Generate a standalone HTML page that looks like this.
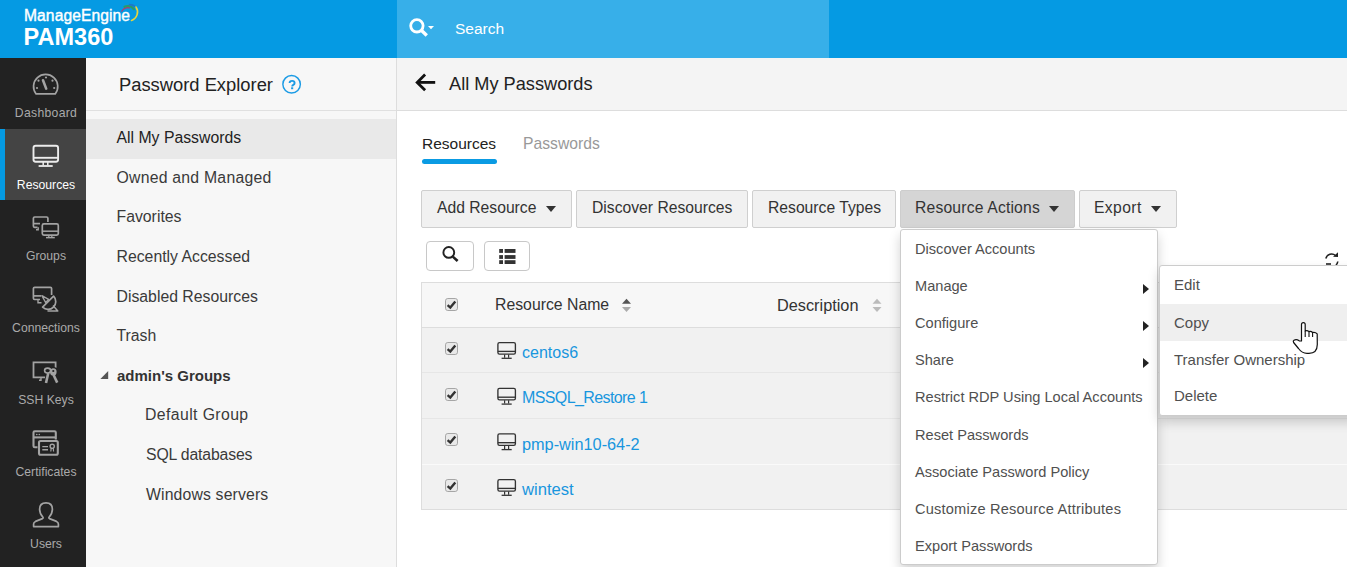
<!DOCTYPE html>
<html><head><meta charset="utf-8">
<style>
*{box-sizing:border-box;margin:0;padding:0}
html,body{width:1347px;height:567px;overflow:hidden;background:#fff;font-family:"Liberation Sans",sans-serif;color:#333}
.a{position:absolute}
.t{position:absolute;line-height:1;white-space:nowrap}
#hdr{left:0;top:0;width:1347px;height:58px;background:#059ae3}
#srch{left:397px;top:0;width:432px;height:58px;background:#37afe9}
#nav{left:0;top:58px;width:86px;height:509px;background:#222}
#navact{left:0;top:129px;width:86px;height:71px;background:#444}
#navbar{left:0;top:129px;width:5px;height:71px;background:#059ae3}
.nl{color:#aaa;font-size:12.2px;width:86px;text-align:center;left:3px}
#exp{left:86px;top:58px;width:311px;height:509px;background:#f7f7f7;border-right:1px solid #ddd}
#exphd{left:86px;top:110px;width:310px;height:1px;background:#e0e0e0}
#expact{left:86px;top:119px;width:310px;height:40px;background:#e9e9e9}
.el{font-size:15.8px;color:#3a3a3a;left:116.5px}
#topbar{left:397px;top:58px;width:950px;height:53px;background:#f4f4f4;border-bottom:1px solid #ddd}
.btn{position:absolute;top:190px;height:38px;background:#f1f1f1;border:1px solid #cfcfcf;border-radius:2px}
.bt{font-size:15.7px;color:#333}
.caret{position:absolute;width:0;height:0;border-left:5px solid transparent;border-right:5px solid transparent;border-top:6px solid #333}
.ib{position:absolute;top:241px;height:30px;background:#fff;border:1px solid #c8c8c8;border-radius:4px}
#tbl{left:421px;top:282px;width:930px;height:228px;border:1px solid #ddd;background:#f1f1f1}
#thd{left:422px;top:283px;width:930px;height:45px;background:#f7f7f7;border-bottom:1px solid #ddd}
.rsep{position:absolute;left:422px;width:930px;height:1px;background:#e6e6e6}
.cb{position:absolute;left:445px;width:13px;height:13px;border:1px solid #9a9a9a;border-radius:2px;background:#e6e6e6}
.link{font-size:16px;color:#1896de}
#dd{left:900px;top:229px;width:258px;height:336px;background:#fff;border:1px solid #ccc;border-radius:3px;box-shadow:0 6px 12px rgba(0,0,0,.175)}
.di{font-size:14.6px;color:#505050;left:915px}
.arr{position:absolute;left:1143px;width:0;height:0;border-top:5.5px solid transparent;border-bottom:5.5px solid transparent;border-left:6px solid #222}
#sub{left:1159px;top:265px;width:200px;height:151px;background:#fff;border:1px solid #ccc;border-radius:3px;box-shadow:0 6px 12px rgba(0,0,0,.175)}
#subhov{left:1160px;top:304px;width:200px;height:37px;background:#efefef}
.si{font-size:15px;color:#505050;left:1174px}
</style></head><body>
<div class="a" id="hdr"></div>
<div class="a" id="srch"></div>
<div class="t" style="left:24px;top:8.2px;font-size:15.6px;font-weight:400;color:#fff;-webkit-text-stroke:0.4px #fff;letter-spacing:0.1px">ManageEngine</div>
<div class="t" style="left:23.6px;top:25.9px;font-size:23.5px;font-weight:700;color:#fff">PAM360</div>
<div class="t" style="left:455px;top:20.6px;font-size:15.5px;color:#fff">Search</div>

<div class="a" id="nav"></div>
<div class="a" id="navact"></div>
<div class="a" id="navbar"></div>
<div class="t nl" style="top:107.1px;letter-spacing:0.3px">Dashboard</div>
<div class="t nl" style="top:179.0px;color:#fff">Resources</div>
<div class="t nl" style="top:249.5px">Groups</div>
<div class="t nl" style="top:322.0px">Connections</div>
<div class="t nl" style="top:394.0px">SSH Keys</div>
<div class="t nl" style="top:466.0px">Certificates</div>
<div class="t nl" style="top:538.0px">Users</div>

<div class="a" id="exp"></div>
<div class="a" id="exphd"></div>
<div class="a" id="expact"></div>
<div class="t" style="left:119px;top:75.9px;font-size:18.35px;color:#222">Password Explorer</div>
<div class="t el" style="top:130px;color:#222">All My Passwords</div>
<div class="t el" style="top:169.5px;letter-spacing:0.23px">Owned and Managed</div>
<div class="t el" style="top:208.6px">Favorites</div>
<div class="t el" style="top:248.6px">Recently Accessed</div>
<div class="t el" style="top:289.0px">Disabled Resources</div>
<div class="t el" style="top:328.2px">Trash</div>
<div class="t" style="left:117px;top:368.2px;font-size:15px;font-weight:700;color:#333">admin's Groups</div>
<div class="t el" style="left:145px;top:407.0px;letter-spacing:0.4px">Default Group</div>
<div class="t el" style="left:146px;top:446.7px;letter-spacing:-0.15px">SQL databases</div>
<div class="t el" style="left:146px;top:486.8px;letter-spacing:0.14px">Windows servers</div>

<div class="a" id="topbar"></div>
<div class="t" style="left:449px;top:74.6px;font-size:18.2px;color:#222">All My Passwords</div>

<div class="t" style="left:422px;top:136.3px;font-size:15.5px;color:#222">Resources</div>
<div class="a" style="left:422px;top:158.5px;width:75px;height:5px;border-radius:3px;background:#0a9be3"></div>
<div class="t" style="left:523px;top:136.3px;font-size:15.7px;color:#999">Passwords</div>

<div class="btn" style="left:421px;width:151px"></div>
<div class="t bt" style="left:437px;top:200.3px">Add Resource</div>
<div class="caret" style="left:546px;top:206px"></div>
<div class="btn" style="left:576px;width:172px"></div>
<div class="t bt" style="left:592px;top:200.3px">Discover Resources</div>
<div class="btn" style="left:752px;width:144px"></div>
<div class="t bt" style="left:768px;top:200.3px">Resource Types</div>
<div class="btn" style="left:900px;width:175px;background:#d5d5d5;border-color:#cdcdcd"></div>
<div class="t bt" style="left:915px;top:200.3px;letter-spacing:0.18px">Resource Actions</div>
<div class="caret" style="left:1049px;top:206px"></div>
<div class="btn" style="left:1079px;width:98px"></div>
<div class="t bt" style="left:1094px;top:200.3px;letter-spacing:0.4px">Export</div>
<div class="caret" style="left:1151px;top:206px"></div>

<div class="ib" style="left:426px;width:48px"></div>
<div class="ib" style="left:484px;width:46px"></div>

<div class="a" id="tbl"></div>
<div class="a" id="thd"></div>
<div class="rsep" style="top:372px"></div>
<div class="rsep" style="top:418px"></div>
<div class="rsep" style="top:464px;background:#fafafa"></div>
<svg class="a" style="left:445px;top:298px" width="13" height="13" viewBox="0 0 13 13"><rect x="0.5" y="0.5" width="12" height="12" rx="2.3" fill="#e9e9e9" stroke="#a6a6a6"/><path d="M2.6,7.2 L5.3,9.6 L10.3,3.4" fill="none" stroke="#333" stroke-width="2.4"/></svg><svg class="a" style="left:445px;top:342px" width="13" height="13" viewBox="0 0 13 13"><rect x="0.5" y="0.5" width="12" height="12" rx="2.3" fill="#e9e9e9" stroke="#a6a6a6"/><path d="M2.6,7.2 L5.3,9.6 L10.3,3.4" fill="none" stroke="#333" stroke-width="2.4"/></svg><svg class="a" style="left:445px;top:388px" width="13" height="13" viewBox="0 0 13 13"><rect x="0.5" y="0.5" width="12" height="12" rx="2.3" fill="#e9e9e9" stroke="#a6a6a6"/><path d="M2.6,7.2 L5.3,9.6 L10.3,3.4" fill="none" stroke="#333" stroke-width="2.4"/></svg><svg class="a" style="left:445px;top:433px" width="13" height="13" viewBox="0 0 13 13"><rect x="0.5" y="0.5" width="12" height="12" rx="2.3" fill="#e9e9e9" stroke="#a6a6a6"/><path d="M2.6,7.2 L5.3,9.6 L10.3,3.4" fill="none" stroke="#333" stroke-width="2.4"/></svg><svg class="a" style="left:445px;top:479px" width="13" height="13" viewBox="0 0 13 13"><rect x="0.5" y="0.5" width="12" height="12" rx="2.3" fill="#e9e9e9" stroke="#a6a6a6"/><path d="M2.6,7.2 L5.3,9.6 L10.3,3.4" fill="none" stroke="#333" stroke-width="2.4"/></svg>
<div class="t" style="left:495px;top:297.2px;font-size:15.8px;color:#333">Resource Name</div>
<div class="t" style="left:777px;top:297.2px;font-size:16.3px;color:#333">Description</div>
<div class="t link" style="left:522px;top:344.5px">centos6</div>
<div class="t link" style="left:522px;top:390.3px;font-size:16px;letter-spacing:-0.6px">MSSQL_Restore 1</div>
<div class="t link" style="left:522px;top:435.5px;font-size:16.3px">pmp-win10-64-2</div>
<div class="t link" style="left:522px;top:481.5px;font-size:16.6px">wintest</div>


<svg class="a" style="left:0;top:0" width="1347" height="567" viewBox="0 0 1347 567">
<!-- logo arc -->
<g fill="none" stroke-linecap="round">
<path d="M121.8,11.2 A7.5,7.5 0 0 1 129.5,7.8" stroke="#c0306a" stroke-width="1.2"/>
<path d="M124.5,6.8 A8,8 0 0 1 134,9.2" stroke="#2a9a6a" stroke-width="2.2"/>
<path d="M129.5,4.6 A9,9 0 0 1 135.5,6.8" stroke="#1f78c8" stroke-width="1.6"/>
<path d="M136,7 A9,9 0 0 1 131.5,20.5" stroke="#e8d43a" stroke-width="1.6"/>
</g>
<!-- header search icon -->
<circle cx="416.9" cy="25.8" r="6.2" fill="none" stroke="#fff" stroke-width="2.8"/>
<path d="M421.3,30.3 L426.8,35.5" stroke="#fff" stroke-width="3.4"/>
<path d="M428,26 L434,26 L431,29.3 Z" fill="#fff"/>
<!-- nav icons gray -->
<g fill="none" stroke="#a3a3a3" stroke-width="1.7">
 <!-- gauge -->
 <path d="M36.1,93.95 A12.1,12.1 0 1 1 55.2,93.95 Z" stroke-linejoin="round"/>
 <path d="M43,80.3 L46.2,88.6" stroke-width="2.6" stroke-linecap="round"/>
</g>
<g fill="#a3a3a3">
 <circle cx="46" cy="77.5" r="1.1"/><circle cx="38.5" cy="80.7" r="1.1"/><circle cx="52.5" cy="80.7" r="1.1"/>
 <circle cx="37" cy="88" r="1.1"/><circle cx="54.2" cy="88" r="1.1"/>
</g>
<!-- resources monitor (white) -->
<g fill="none" stroke="#ececec" stroke-width="1.9">
 <rect x="33.5" y="145.7" width="24.6" height="16" rx="2.2"/>
 <path d="M33.5,157.8 L58.1,157.8"/>
 <path d="M43.2,162 L43.2,165.5 M47.8,162 L47.8,165.5" stroke-width="1.5"/>
 <path d="M38.6,166 L52.7,166" stroke-width="1.8"/>
</g>
<!-- groups -->
<g fill="none" stroke="#a3a3a3" stroke-width="1.7">
 <path d="M37.5,227.3 L34.5,227.3 Q33.4,227.3 33.4,226 L33.4,218.3 Q33.4,217 34.7,217 L46.6,217 Q47.9,217 47.9,218.3 L47.9,222"/>
 <path d="M33.4,223.6 L40,223.6"/>
 <path d="M38.2,227.3 L38.2,229.8 L36,229.8" stroke-width="1.4"/>
 <rect x="42.3" y="223.9" width="16" height="11.2" rx="1.6"/>
 <path d="M42.3,231.2 L58.3,231.2" stroke-width="1.5"/>
 <path d="M48.8,235.2 L48.8,237 M51.8,235.2 L51.8,237" stroke-width="1.3"/>
 <path d="M46,237.6 L54.8,237.6" stroke-width="1.5"/>
</g>
<!-- connections -->
<g fill="none" stroke="#a3a3a3" stroke-width="1.7">
 <path d="M40,299.5 L34.6,299.5 Q33.4,299.5 33.4,298.2 L33.4,288.6 Q33.4,287.3 34.7,287.3 L50.3,287.3 Q51.6,287.3 51.6,288.6 L51.6,295"/>
 <path d="M33.4,295.9 L41,295.9"/>
 <path d="M38,300 L38,302.8 L41.5,302.8" stroke-width="1.4"/>
 <path d="M53.6,296.2 L42.6,307.2 A7.78,7.78 0 0 0 53.6,296.2 Z" stroke-linejoin="round" fill="#222"/>
 <path d="M41.9,295.7 L48.6,299.4 L45.6,302.5 Z" stroke-width="1.4" stroke-linejoin="round"/>
 <path d="M53,305.5 L57.8,311 L47.5,311" stroke-width="1.5" stroke-linejoin="round"/>
</g>
<!-- ssh keys -->
<g fill="none" stroke="#a3a3a3" stroke-width="1.8">
 <path d="M45.3,377.3 L33.5,377.3 L33.5,362.3 L55.6,362.3 L55.6,367.8"/>
 <path d="M41,377.5 L41,380.2 L39,380.2" stroke-width="1.4"/>
</g>
<g fill="none" stroke="#222" stroke-width="4.2" stroke-linecap="round">
 <ellipse cx="47.6" cy="370.6" rx="3" ry="2.5"/>
 <path d="M48.3,373.5 L46,383"/><path d="M53.6,375.5 L57.2,382.6"/>
</g>
<ellipse cx="53.3" cy="372" rx="4.6" ry="5" fill="#222"/>
<ellipse cx="47.6" cy="370.6" rx="3" ry="2.5" fill="none" stroke="#a3a3a3" stroke-width="1.6"/>
<path d="M48.3,373 L46,383" stroke="#a3a3a3" stroke-width="2.6"/>
<ellipse cx="53.3" cy="372" rx="3.3" ry="3.7" fill="#a3a3a3"/>
<path d="M53.6,375 L57.2,382.6" stroke="#a3a3a3" stroke-width="2.6"/>
<circle cx="53.3" cy="371" r="1.1" fill="#222"/>
<!-- certificates -->
<g fill="none" stroke="#a3a3a3" stroke-width="2.1">
 <path d="M37.5,447.2 L34.8,447.2 Q33.5,447.2 33.5,445.9 L33.5,432.5 Q33.5,431.2 34.8,431.2 L54.5,431.2 Q55.8,431.2 55.8,432.5 L55.8,439.5"/>
 <path d="M33.5,437.4 L55.8,437.4"/>
 <rect x="39" y="441" width="18.8" height="13.8" rx="1.5"/>
 <path d="M42.3,446.6 L48,446.6 M42.3,449.8 L48,449.8" stroke-width="1.4"/>
 <circle cx="52.2" cy="446.3" r="2.1" stroke-width="1.4"/>
 <path d="M51.2,448.3 L50.8,451.5 M53.2,448.3 L53.6,451.5" stroke-width="1.2"/>
</g>
<circle cx="36.8" cy="434.5" r="0.8" fill="#a3a3a3"/><circle cx="39.3" cy="434.5" r="0.8" fill="#a3a3a3"/>
<!-- users -->
<path d="M33.6,526.6 L33.6,524 Q33.6,522.3 35.5,521.4 L42.5,518.6 Q43.6,518 42.8,517 Q39.6,513.5 39.6,509.3 Q39.6,502.9 46,502.9 Q52.4,502.9 52.4,509.3 Q52.4,513.5 49.2,517 Q48.4,518 49.5,518.6 L56.5,521.4 Q58.4,522.3 58.4,524 L58.4,526.6 Z" fill="none" stroke="#a3a3a3" stroke-width="1.7" stroke-linejoin="round"/>
<!-- help icon -->
<circle cx="291.6" cy="84.3" r="8.75" fill="none" stroke="#1b9be5" stroke-width="1.45"/>
<!-- admin triangle -->
<path d="M100.4,379 L108.2,379 L108.2,371 Z" fill="#555"/>
<!-- back arrow -->
<g fill="none" stroke="#111" stroke-width="2.8" stroke-linecap="butt">
 <path d="M417,82.4 L435.2,82.4"/>
 <path d="M425.1,74.5 L417.2,82.4 L425.1,90.2"/>
</g>
<!-- search button icon -->
<circle cx="448.8" cy="252.4" r="5.4" fill="none" stroke="#222" stroke-width="1.9"/>
<path d="M452.8,256.6 L457.6,261" stroke="#222" stroke-width="2.6" stroke-linecap="butt"/>
<!-- list icon -->
<g fill="#333">
 <rect x="499.2" y="249" width="3.8" height="3.9"/><rect x="504.6" y="249" width="10.9" height="3.9"/>
 <rect x="499.2" y="255.1" width="3.8" height="3.8"/><rect x="504.6" y="255.1" width="10.9" height="3.8"/>
 <rect x="499.2" y="260.2" width="3.8" height="3.8"/><rect x="504.6" y="260.2" width="10.9" height="3.8"/>
</g>
<!-- sort icons -->
<path d="M622,303.7 L631,303.7 L626.5,298.7 Z" fill="#555"/>
<path d="M622,306.9 L631,306.9 L626.5,312 Z" fill="#aaa"/>
<path d="M872.5,303.7 L881.5,303.7 L877,298.7 Z" fill="#bbb"/>
<path d="M872.5,306.9 L881.5,306.9 L877,312 Z" fill="#bbb"/>
<!-- row monitors -->
<g fill="none" stroke="#333" stroke-width="1.35">
 <rect x="497.9" y="342.6" width="17.5" height="11.5" rx="1.6"/>
 <path d="M497.9,351.4 L515.4,351.4"/>
 <path d="M504.6,354.4 L504.6,357.8 M508.6,354.4 L508.6,357.8" stroke-width="1.2"/>
 <path d="M501.6,358.3 L511.7,358.3" stroke-width="1.3"/>
</g>
<g transform="translate(0,45.8)" fill="none" stroke="#333" stroke-width="1.35">
 <rect x="497.9" y="342.6" width="17.5" height="11.5" rx="1.6"/>
 <path d="M497.9,351.4 L515.4,351.4"/>
 <path d="M504.6,354.4 L504.6,357.8 M508.6,354.4 L508.6,357.8" stroke-width="1.2"/>
 <path d="M501.6,358.3 L511.7,358.3" stroke-width="1.3"/>
</g>
<g transform="translate(0,91.3)" fill="none" stroke="#333" stroke-width="1.35">
 <rect x="497.9" y="342.6" width="17.5" height="11.5" rx="1.6"/>
 <path d="M497.9,351.4 L515.4,351.4"/>
 <path d="M504.6,354.4 L504.6,357.8 M508.6,354.4 L508.6,357.8" stroke-width="1.2"/>
 <path d="M501.6,358.3 L511.7,358.3" stroke-width="1.3"/>
</g>
<g transform="translate(0,137)" fill="none" stroke="#333" stroke-width="1.35">
 <rect x="497.9" y="342.6" width="17.5" height="11.5" rx="1.6"/>
 <path d="M497.9,351.4 L515.4,351.4"/>
 <path d="M504.6,354.4 L504.6,357.8 M508.6,354.4 L508.6,357.8" stroke-width="1.2"/>
 <path d="M501.6,358.3 L511.7,358.3" stroke-width="1.3"/>
</g>
<!-- refresh -->
<g fill="none" stroke="#222" stroke-width="1.6">
 <path d="M1325.8,258.5 A6,6 0 0 1 1335.5,255.5"/>
 <path d="M1337.8,261.5 A6,6 0 0 1 1336,265"/><path d="M1326,264 L1331,264"/>
</g>
<path d="M1333,256.8 L1338,252.3 L1338,257 Z" fill="#222"/>
</svg>
<div class="a" id="dd"></div>
<div class="t di" style="top:241.6px">Discover Accounts</div>
<div class="t di" style="top:278.6px">Manage</div>
<div class="t di" style="top:316px">Configure</div>
<div class="t di" style="top:352.6px">Share</div>
<div class="t di" style="top:390.1px">Restrict RDP Using Local Accounts</div>
<div class="t di" style="top:427.6px">Reset Passwords</div>
<div class="t di" style="top:464.6px">Associate Password Policy</div>
<div class="t di" style="top:502.1px;letter-spacing:0.2px">Customize Resource Attributes</div>
<div class="t di" style="top:538.8px">Export Passwords</div>
<div class="arr" style="top:284px"></div>
<div class="arr" style="top:321px"></div>
<div class="arr" style="top:358px"></div>

<div class="a" id="sub"></div>
<div class="a" id="subhov"></div>
<div class="t si" style="top:277.3px">Edit</div>
<div class="t si" style="top:315.1px">Copy</div>
<div class="t si" style="top:351.9px">Transfer Ownership</div>
<div class="t si" style="top:388.1px">Delete</div>

<svg class="a" style="left:0;top:0" width="1347" height="567" viewBox="0 0 1347 567"><path d="M289.6,82.9 Q289.6,80.9 292.1,80.9 Q294.6,80.9 294.6,82.9 Q294.6,84.2 293.3,84.8 Q292.2,85.4 292.2,86.6" fill="none" stroke="#1b9be5" stroke-width="1.9"/><rect x="291.1" y="87.3" width="2.1" height="1.9" fill="#1b9be5"/></svg>
<svg class="a" style="left:0;top:0" width="1347" height="567" viewBox="0 0 1347 567">
<path d="M1301.5,341 L1301.5,324.6 Q1301.5,322.6 1303.35,322.6 Q1305.2,322.6 1305.2,324.6 L1305.2,331 Q1307.3,330.2 1309,331.6 Q1311,330.9 1312.6,332.5 Q1315.2,331.8 1317.2,333.8 L1317.3,344.5 Q1317.2,353.3 1309,353.3 L1307,353.3 Q1302,353.3 1298.5,348.5 L1293.6,342.5 Q1292.7,341 1294,340.2 Q1296.5,339 1299.2,340.8 Z" fill="#fff" stroke="#111" stroke-width="1.2" stroke-linejoin="round"/>
<path d="M1305.2,331 L1305.2,337 M1309,331.6 L1309,337 M1312.6,332.5 L1312.6,337" stroke="#111" stroke-width="1.1"/>
</svg>
</body></html>
